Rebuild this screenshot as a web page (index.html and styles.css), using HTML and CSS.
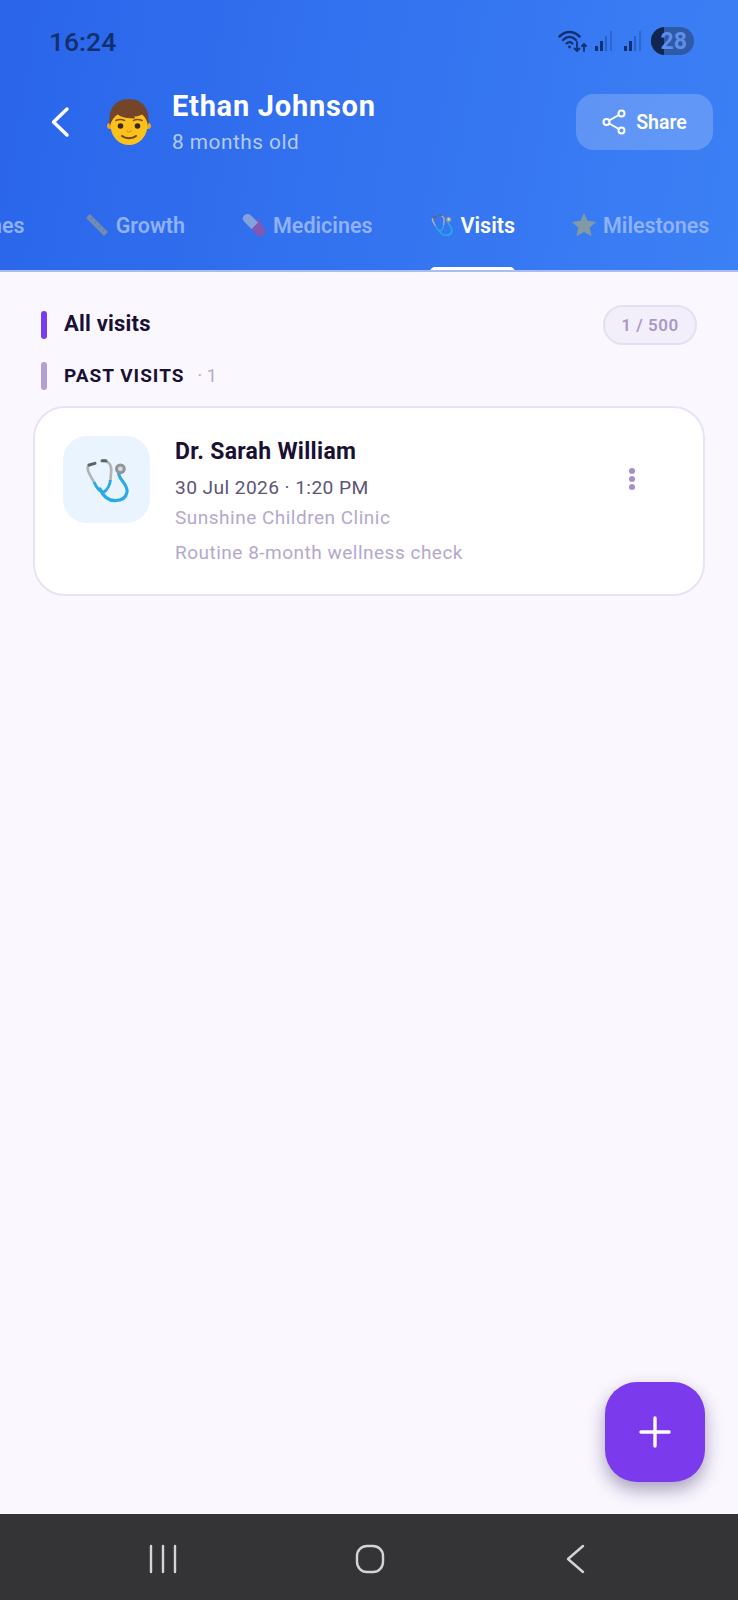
FILE: index.html
```html
<!DOCTYPE html>
<html>
<head>
    <title>Ethan Johnson - Visits</title>
    <meta name="viewport" content="width=device-width, initial-scale=1">
    <link rel="stylesheet" href="styles.css">
</head>
<body>
    <div class="screen">
        <header class="header">
            <div class="status-bar">
                <span class="clock">16:24</span>
                <div class="status-icons">
                    <svg class="wifi" width="30" height="24" viewBox="0 0 30 24" fill="none" stroke="#12306f" stroke-linecap="round">
                        <path d="M1.5 7.5C7.5 1.5 15.500 1.500 21.500 7.500" stroke-width="2.600"/>
                        <path d="M5 11C9 7 14 7 18 11" stroke-width="2.400"/>
                        <path d="M8.500 14.500C10.500 12.700 12.500 12.700 14.500 14.500" stroke-width="2.200"/>
                        <circle cx="11.500" cy="18" r="1.400" fill="#12306f" stroke="none"/>
                        <path d="M19 13V22M16.500 19.500L19 22L21.500 19.500" stroke-width="1.800"/>
                        <path d="M26 22V15M24 17L26 15L28 17" stroke-width="1.800"/>
                    </svg>
                    <svg class="signal" width="20" height="20" viewBox="0 0 20 20">
                        <rect x="1" y="15" width="3" height="5" fill="#12306f"/>
                        <rect x="6" y="10" width="3" height="10" fill="#12306f"/>
                        <rect x="11" y="5" width="2" height="15" fill="#1f4fa8" opacity=".6"/>
                        <rect x="16" y="0" width="2" height="20" fill="#1f4fa8" opacity=".45"/>
                    </svg>
                    <svg class="signal" width="20" height="20" viewBox="0 0 20 20">
                        <rect x="1" y="15" width="3" height="5" fill="#12306f"/>
                        <rect x="6" y="10" width="3" height="10" fill="#12306f"/>
                        <rect x="11" y="5" width="2" height="15" fill="#1f4fa8" opacity=".6"/>
                        <rect x="16" y="0" width="2" height="20" fill="#1f4fa8" opacity=".45"/>
                    </svg>
                    <div class="battery">
                        <span class="battery-level"></span>
                        <span class="battery-num">28</span>
                    </div>
                </div>
            </div>

            <div class="profile-row">
                <button class="back-btn" aria-label="Back">
                    <svg width="20" height="32" viewBox="0 0 20 32" fill="none" stroke="#fff" stroke-width="3.400" stroke-linecap="round" stroke-linejoin="round">
                        <path d="M16 3L2.500 16L16 29"/>
                    </svg>
                </button>
                <svg class="avatar" width="44" height="46" viewBox="0 0 44 46">
                    <circle cx="3" cy="27" r="3" fill="#e9a91f"/>
                    <circle cx="41" cy="27" r="3" fill="#e9a91f"/>
                    <ellipse cx="22" cy="26" rx="18.500" ry="20" fill="#fcc21b"/>
                    <path d="M3 27C0 11 8 0 22 0C36 0 44 11 41 27C40 21 38 18 35 15.500C32 17 30 17.500 27 17.500C28 18.500 28 19 28 19.500C21 19.500 15 18.500 10.500 15.500C7 18 4.500 21 3 27Z" fill="#75452a"/>
                    <circle cx="13.500" cy="27" r="2.800" fill="#3a2a18"/>
                    <circle cx="30.500" cy="27" r="2.800" fill="#3a2a18"/>
                    <path d="M9 21.500C11.500 20 15.500 20 17.500 21.500M26.500 21.500C28.500 20 32.500 20 35 21.500" fill="none" stroke="#7a4f22" stroke-width="1.500" stroke-linecap="round"/>
                    <path d="M20 32C21 33 23 33 24 32" fill="none" stroke="#e39a17" stroke-width="1.500" stroke-linecap="round"/>
                    <path d="M15 37C18.500 40 25.500 40 29 37" fill="none" stroke="#6d4424" stroke-width="2" stroke-linecap="round"/>
                </svg>
                <div class="profile-text">
                    <div class="child-name">Ethan Johnson</div>
                    <div class="child-age">8 months old</div>
                </div>
                <button class="share-btn">
                    <svg width="24" height="26" viewBox="0 0 24 26" fill="none" stroke="#fff" stroke-width="2">
                        <circle cx="4.500" cy="13" r="3"/>
                        <circle cx="19.500" cy="4.500" r="3"/>
                        <circle cx="19.500" cy="21.500" r="3"/>
                        <path d="M7.200 11.500L16.800 6M7.200 14.500L16.800 20"/>
                    </svg>
                    <span>Share</span>
                </button>
            </div>

            <nav class="tabs">
                <a class="tab tab-first">Vaccines</a>
                <a class="tab">
                    <svg class="tab-emoji" width="24" height="24" viewBox="0 0 24 24">
                        <path d="M1 5L5 1L23 19L19 23Z" fill="#c8b46a"/>
                        <path d="M6 6L7.500 4.500M10 10L11.500 8.500M14 14L15.500 12.500M18 18L19.500 16.500" stroke="#7d7a52" stroke-width="1"/>
                    </svg>
                    Growth
                </a>
                <a class="tab">
                    <svg class="tab-emoji" width="24" height="24" viewBox="0 0 24 24">
                        <path d="M5.500 8.500L12 9L15.500 5.500L22.500 15.500C24 18 23 20.500 21 22C19 24 16 24 14 21.500L5.500 8.500Z" fill="#e33d6a"/>
                        <path d="M2 2.500C4 .5 7 .5 9 2.500L16 9.500L9.500 16L2.500 9C.5 7 0 4.500 2 2.500Z" fill="#e8e2c8"/>
                    </svg>
                    Medicines
                </a>
                <a class="tab tab-active">
                    <svg class="tab-emoji tab-emoji-on" width="24" height="24" viewBox="0 0 24 24" fill="none">
                        <use href="#stethoscope"/>
                    </svg>
                    Visits
                </a>
                <a class="tab">
                    <svg class="tab-emoji" width="24" height="24" viewBox="0 0 24 24">
                        <path d="M12 1L15.300 8.300L23.300 9.200L17.300 14.600L19 22.600L12 18.500L5 22.600L6.700 14.600L.7 9.200L8.700 8.300Z" fill="#d9c04a" stroke="#d9c04a" stroke-linejoin="round"/>
                    </svg>
                    Milestones
                </a>
            </nav>
        </header>

        <main class="content">
            <div class="section-head">
                <div class="section-title">
                    <span class="bar"></span>
                    <span class="title-text">All visits</span>
                </div>
                <span class="count-pill">1 / 500</span>
            </div>

            <div class="group-head">
                <span class="bar bar-soft"></span>
                <span class="group-label">PAST VISITS</span>
                <span class="group-count">&middot; 1</span>
            </div>

            <div class="visit-card">
                <div class="visit-icon">
                    <svg width="48" height="48" viewBox="0 0 24 24" fill="none">
                        <use href="#stethoscope"/>
                    </svg>
                </div>
                <div class="visit-info">
                    <div class="doctor">Dr. Sarah William</div>
                    <div class="visit-date">30 Jul 2026 &middot; 1:20 PM</div>
                    <div class="visit-place">Sunshine Children Clinic</div>
                    <div class="visit-note">Routine 8-month wellness check</div>
                </div>
                <div class="more-btn">
                    <span></span><span></span><span></span>
                </div>
            </div>

            <button class="fab" aria-label="Add visit">
                <svg width="32" height="32" viewBox="0 0 32 32" stroke="#fff" stroke-width="3.400" stroke-linecap="round">
                    <path d="M16 2V30M2 16H30"/>
                </svg>
            </button>
        </main>

        <footer class="nav-bar">
            <svg width="30" height="30" viewBox="0 0 30 30" stroke="#d4d4d4" stroke-width="2.400" stroke-linecap="round">
                <path d="M3 2V28M15 2V28M27 2V28"/>
            </svg>
            <svg class="nav-home" width="30" height="30" viewBox="0 0 30 30" fill="none" stroke="#d4d4d4" stroke-width="2.400">
                <rect x="2" y="2" width="26" height="26" rx="10"/>
            </svg>
            <svg width="20" height="30" viewBox="0 0 20 30" fill="none" stroke="#d4d4d4" stroke-width="2.400" stroke-linecap="round" stroke-linejoin="round">
                <path d="M17 2L2 15L17 28"/>
            </svg>
        </footer>
    </div>

    <svg class="defs" width="0" height="0">
        <defs>
            <g id="stethoscope">
                <path d="M3 4.500C1.500 6 2.500 8 5.500 13M9.500 2.400C14 2.400 14.500 6 14 9L13.700 12" stroke="#b0b3b5" stroke-width="1.300"/>
                <path d="M5.500 13C7 16.500 9 18 10.500 18C12 17 13.500 14.500 13.700 12" stroke="#29a9e6" stroke-width="1.500"/>
                <path d="M17.800 8.500C18 12 22.500 14 22 18C21.500 21 19 22.300 16 22.300C12.500 22.300 10 20 8.500 16.500" stroke="#29a9e6" stroke-width="1.600" stroke-linecap="round"/>
                <path d="M3 4.500L6 3.700M9.500 2.400L11.500 2.400" stroke="#5d6468" stroke-width="1.500" stroke-linecap="round"/>
                <circle cx="18.700" cy="6.400" r="2.700" fill="#8f9598"/>
                <circle cx="18.700" cy="6.400" r="1.200" fill="#d8dadb"/>
            </g>
        </defs>
    </svg>
</body>
</html>
```

FILE: styles.css
```css
* {
    box-sizing: border-box;
}

body {
    margin: 0;
    font-family: Roboto, "Liberation Sans", sans-serif;
    background-color: #faf7ff;
}

.screen {
    width: 738px;
    height: 1600px;
    display: flex;
    flex-direction: column;
    overflow: hidden;
}

button {
    border: none;
    background: none;
    padding: 0;
    font-family: inherit;
}

/* header */
.header {
    height: 272px;
    flex-shrink: 0;
    background: linear-gradient(100deg, #2a65ea, #3c80f5);
    border-bottom: 2px solid #a9bdf2;
    overflow: hidden;
}

.status-bar {
    height: 82px;
    padding: 0 44px 0 49px;
    display: flex;
    align-items: center;
    justify-content: space-between;
}

.clock {
    font-size: 26.500px;
    font-weight: 500;
    color: #12306f;
}

.status-icons {
    display: flex;
    align-items: center;
    gap: 7px;
}

.wifi {
    margin-right: -3px;
}

.signal {
    margin-left: 2px;
}

.battery {
    position: relative;
    width: 43px;
    height: 28px;
    margin-left: 1px;
    border-radius: 14px;
    background-color: #2f5aa8;
    overflow: hidden;
    display: flex;
    align-items: center;
    justify-content: flex-end;
    padding-right: 7px;
}

.battery-level {
    position: absolute;
    left: 0;
    top: 0;
    width: 13px;
    height: 28px;
    background-color: #12264f;
}

.battery-num {
    position: relative;
    font-size: 23px;
    font-weight: 700;
    color: #5f8fe8;
}

.profile-row {
    height: 68px;
    margin-top: 6px;
    padding: 0 25px 0 51px;
    display: flex;
    align-items: center;
}

.back-btn {
    width: 20px;
    height: 32px;
    display: flex;
}

.avatar {
    margin-left: 36px;
}

.profile-text {
    flex: 1;
    margin-left: 21px;
}

.child-name {
    font-size: 29px;
    font-weight: 700;
    letter-spacing: .75px;
    color: #fff;
    line-height: 34px;
}

.child-age {
    font-size: 20.800px;
    letter-spacing: .5px;
    color: #b3cbfb;
    line-height: 28px;
    margin-top: 5px;
}

.share-btn {
    width: 137px;
    height: 56px;
    border-radius: 18px;
    background-color: rgba(255, 255, 255, .2);
    color: #fff;
    font-size: 19.500px;
    font-weight: 600;
    display: flex;
    align-items: center;
    justify-content: center;
    gap: 10px;
}

.tabs {
    display: flex;
    margin-top: 49px;
    margin-left: -63px;
    white-space: nowrap;
}

.tab {
    display: flex;
    align-items: center;
    gap: 7px;
    height: 40px;
    margin-right: 57px;
    font-size: 21.500px;
    font-weight: 600;
    color: #8fb1f7;
    position: relative;
}

.tab-first {
    margin-right: 60px;
}

.tab-emoji {
    opacity: .45;
}

.tab-emoji-on {
    opacity: 1;
}

.tab-active {
    color: #fff;
}

.tab-active::after {
    content: "";
    position: absolute;
    left: 0;
    right: 0;
    bottom: -27px;
    height: 5px;
    background-color: #fff;
    border-radius: 5px 5px 0 0;
}

/* content */
.content {
    position: relative;
    flex: 1;
    padding: 33px 33px 0;
}

.section-head {
    height: 40px;
    padding: 0 8px;
    display: flex;
    align-items: center;
    justify-content: space-between;
}

.section-title {
    display: flex;
    align-items: center;
    gap: 17px;
    font-size: 22px;
    font-weight: 700;
    letter-spacing: .2px;
    color: #1a1033;
}

.title-text {
    padding-bottom: 3px;
}

.bar {
    display: block;
    width: 6px;
    height: 28px;
    border-radius: 3px;
    background-color: #7c3aed;
}

.bar-soft {
    background-color: #b29fd3;
}

.count-pill {
    width: 94px;
    height: 40px;
    border: 2px solid #e6dff3;
    border-radius: 20px;
    background-color: #f3effa;
    color: #a899c4;
    font-size: 17px;
    font-weight: 600;
    letter-spacing: .5px;
    display: flex;
    align-items: center;
    justify-content: center;
}

.group-head {
    height: 28px;
    margin-top: 17px;
    padding-left: 8px;
    display: flex;
    align-items: center;
}

.group-label {
    margin-left: 17px;
    padding-bottom: 2px;
    font-size: 19px;
    font-weight: 700;
    letter-spacing: 1px;
    color: #1a1033;
}

.group-count {
    margin-left: 13px;
    padding-bottom: 2px;
    font-size: 18px;
    color: #b5a8cc;
}

.visit-card {
    margin-top: 16px;
    height: 190px;
    padding: 28px 68px 0 28px;
    background-color: #fff;
    border: 2px solid #e9e2f7;
    border-radius: 32px;
    display: flex;
    align-items: flex-start;
}

.visit-icon {
    width: 87px;
    height: 87px;
    flex-shrink: 0;
    border-radius: 24px;
    background-color: #eaf4fe;
    display: flex;
    align-items: center;
    justify-content: center;
}

.visit-info {
    flex: 1;
    margin-left: 25px;
    padding-top: 1px;
}

.doctor {
    font-size: 23px;
    font-weight: 700;
    letter-spacing: .3px;
    color: #1a1033;
    line-height: 30px;
}

.visit-date {
    margin-top: 7px;
    font-size: 19.200px;
    letter-spacing: .4px;
    color: #5d5479;
    line-height: 28px;
}

.visit-place,
.visit-note {
    font-size: 19px;
    letter-spacing: .5px;
    color: #b5a8cc;
    line-height: 28px;
}

.visit-place {
    margin-top: 2px;
}

.visit-note {
    margin-top: 7px;
}

.more-btn {
    margin-top: 32px;
    display: flex;
    flex-direction: column;
    gap: 2px;
}

.more-btn span {
    width: 6px;
    height: 6px;
    border-radius: 50%;
    background-color: #a48fc9;
}

.fab {
    position: absolute;
    right: 33px;
    bottom: 32px;
    width: 100px;
    height: 100px;
    border-radius: 32px;
    background-color: #7c3aed;
    box-shadow: 0 8px 18px rgba(50, 30, 90, .4);
    display: flex;
    align-items: center;
    justify-content: center;
}

/* android nav */
.nav-bar {
    height: 86px;
    flex-shrink: 0;
    background-color: #343436;
    padding: 3px 152px 0 148px;
    display: flex;
    align-items: center;
    justify-content: space-between;
}

.nav-home {
    margin-left: -4px;
}

.defs {
    position: absolute;
}
```
